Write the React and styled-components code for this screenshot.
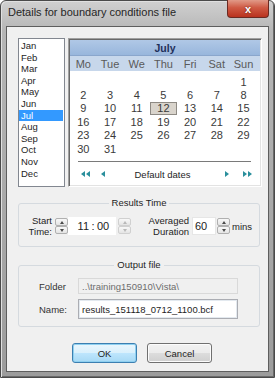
import styled, { createGlobalStyle } from 'styled-components';

const GlobalStyle = createGlobalStyle`
body {
  margin: 0;
  background: #ffffff;
}
* {
  box-sizing: border-box;
}
`

const Frame = styled.div`
width: 275px;
height: 378px;
display: flex;
flex-direction: column;
padding: 0 5px 5px 5px;
border: 1px solid #4a4a4a;
border-radius: 6px 6px 0 0;
background: linear-gradient(#d0d0d0, #b6b6b6 30px, #9c9c9c);
box-shadow: inset 1px 1px 0 #e0e0e0, inset -1px -1px 0 #6a6a6a;
font-family: "Liberation Sans", Arial, sans-serif;
font-size: 9.5px;
color: #1e1e1e;
`

const TitleBar = styled.div`
height: 25px;
display: flex;
align-items: flex-start;
`

const Title = styled.div`
padding: 5px 0 0 2px;
font-size: 11px;
color: #262626;
`

const CloseBtn = styled.div`
margin: -1px 0 0 auto;
width: 42px;
height: 18px;
border: 1px solid #6b2a22;
border-top: none;
border-radius: 0 0 4px 4px;
background: linear-gradient(#e19a88, #cf5a44 45%, #b9321e);
display: flex;
align-items: center;
justify-content: center;
color: #ffffff;
font-size: 11px;
font-weight: bold;
text-shadow: 0 0 2px #5a1a10;
`

const Client = styled.div`
flex: 1;
border: 1px solid #5e5e5e;
background: #f0f0f0;
display: flex;
flex-direction: column;
`

const TopRow = styled.div`
display: flex;
gap: 3px;
margin: 11px 0 0 11px;
height: 149px;
`

const MonthList = styled.div`
width: 47px;
border: 1px solid #828790;
background: #ffffff;
padding: 1px 1px 0 0;
`

const MonthItem = styled.div`
height: 11.6px;
line-height: 11.6px;
padding-left: 2px;
color: ${p => (p.$sel ? '#ffffff' : '#1e1e1e')};
background: ${p => (p.$sel ? '#3399ff' : 'transparent')};
`

const Calendar = styled.div`
width: 194px;
border: 1px solid;
border-color: #a0a0a0 #ffffff #ffffff #a0a0a0;
box-shadow: inset 1px 1px 0 #696969, inset -1px -1px 0 #e3e3e3;
background: #ffffff;
padding: 1px;
display: flex;
flex-direction: column;
font-size: 11px;
`

const MonthHead = styled.div`
height: 16px;
line-height: 16px;
text-align: center;
font-weight: bold;
font-size: 10.5px;
color: #1f2f5a;
background: linear-gradient(#b0c8e6, #98b6dc);
border-bottom: 1px solid #8aa6cc;
`

const DayNames = styled.div`
height: 15px;
display: grid;
grid-template-columns: repeat(7, 26.7px);
align-items: center;
background: #c7d7eb;
color: #5a5a5a;
`

const Cell = styled.div`
text-align: center;
`

const Days = styled.div`
margin-top: 4px;
display: grid;
grid-template-columns: repeat(7, 26.7px);
grid-auto-rows: 13.4px;
color: #3a3a3a;
`

const DayCell = styled.div`
display: flex;
align-items: center;
justify-content: center;
border: 1px solid ${p => (p.$sel ? '#8e8a84' : 'transparent')};
background: ${p => (p.$sel ? '#d9d4cc' : 'transparent')};
`

const Separator = styled.div`
margin: 6px 9px 0 8px;
height: 1px;
background: #7a7a7a;
`

const NavRow = styled.div`
margin-top: 5px;
height: 14px;
display: flex;
align-items: center;
font-size: 9.5px;
color: #1e1e1e;
`

const NavBtn = styled.div`
width: ${p => p.$w}px;
display: flex;
justify-content: center;
`

const NavText = styled.div`
flex: 1;
text-align: center;
`

const Group = styled.fieldset`
margin: ${p => p.$top}px 8px 0 11px;
height: ${p => p.$h}px;
padding: 0;
border: 1px solid #d5dadf;
border-radius: 3px;
min-width: 0;
`

const Legend = styled.legend`
margin: 0 auto;
padding: 0 3px;
line-height: 12px;
color: #1e1e1e;
`

const TimeRow = styled.div`
display: flex;
align-items: center;
margin-top: 7px;
height: 20px;
`

const Label = styled.div`
width: ${p => p.$w}px;
margin-left: ${p => p.$ml || 0}px;
text-align: right;
line-height: 11px;
`

const Spin = styled.div`
width: 13px;
height: 16px;
margin-left: ${p => p.$ml || 0}px;
display: flex;
flex-direction: column;
`

const SpinBtn = styled.div`
flex: 1;
border: 1px solid ${p => (p.$dis ? '#d0d0d0' : '#b0b0b0')};
border-radius: 2px;
background: linear-gradient(#f8f8f8, #e4e4e4);
display: flex;
align-items: center;
justify-content: center;
`

const Tri = styled.span`
width: 0;
height: 0;
border-left: 2.5px solid transparent;
border-right: 2.5px solid transparent;
border-bottom: ${p => (p.$down ? 'none' : `3px solid ${p.$dis ? '#b8b8b8' : '#4a4a4a'}`)};
border-top: ${p => (p.$down ? `3px solid ${p.$dis ? '#b8b8b8' : '#4a4a4a'}` : 'none')};
`

const TimeBox = styled.div`
width: 48px;
height: 18px;
background: #ffffff;
display: flex;
align-items: center;
font-size: 11px;
color: #222;
`

const TimePart = styled.div`
width: ${p => p.$w}px;
text-align: ${p => p.$align};
`

const NumBox = styled.div`
width: 24px;
height: 18px;
margin-left: 3px;
background: #ffffff;
border: 1px solid #e6e6e6;
padding-left: 2px;
display: flex;
align-items: center;
font-size: 11px;
color: #222;
`

const Unit = styled.div`
margin-left: 2px;
font-size: 9.5px;
`

const FileGrid = styled.div`
display: grid;
grid-template-columns: 39px 160px;
grid-template-rows: 16px 20px;
row-gap: 5px;
align-items: center;
margin: 7px 0 0 20px;
`

const FileLabel = styled.div`
color: #333;
`

const Field = styled.div`
height: 100%;
display: flex;
align-items: center;
padding-left: 3px;
border: 1px solid ${p => (p.$dis ? '#d9d9d9' : '#abadb3')};
background: ${p => (p.$dis ? '#f0f0f0' : '#ffffff')};
color: ${p => (p.$dis ? '#6d6d6d' : '#1e1e1e')};
box-shadow: ${p => (p.$dis ? 'none' : 'inset 0 0 0 1px #e3e9ef')};
`

const Buttons = styled.div`
display: flex;
gap: 10px;
margin: 16px 0 0 65px;
`

const Button = styled.div`
width: 65px;
height: 20px;
border-radius: 3px;
border: 1px solid ${p => (p.$def ? '#3c7fb1' : '#707070')};
background: ${p => (p.$def
    ? 'linear-gradient(#eaf6fd, #d9f0fc 50%, #bee6fd 50%, #a7d9f5)'
    : 'linear-gradient(#f2f2f2, #ebebeb 50%, #dddddd 50%, #cfcfcf)')};
box-shadow: inset 0 0 0 1px ${p => (p.$def ? '#8fd0f0' : '#fcfcfc')};
display: flex;
align-items: center;
justify-content: center;
color: #1e1e1e;
`

const months = ['Jan', 'Feb', 'Mar', 'Apr', 'May', 'Jun', 'Jul', 'Aug', 'Sep', 'Oct', 'Nov', 'Dec'];
const dayNames = ['Mo', 'Tue', 'We', 'Thu', 'Fri', 'Sat', 'Sun'];
const days = [null, null, null, null, null, null];
for (let d = 1; d <= 31; d++) days.push(d);

const NavIcon = ({ dir, double }) => (
    <svg width={double ? 9 : 4} height="6" viewBox={double ? '0 0 9 6' : '0 0 4 6'}>
        {dir === 'left' ? (
            double ? (
                <path d="M4 0 L0 3 L4 6 Z M9 0 L5 3 L9 6 Z" fill="#2a8f9c" />
            ) : (
                <path d="M4 0 L0 3 L4 6 Z" fill="#2a8f9c" />
            )
        ) : double ? (
            <path d="M0 0 L4 3 L0 6 Z M5 0 L9 3 L5 6 Z" fill="#2a8f9c" />
        ) : (
            <path d="M0 0 L4 3 L0 6 Z" fill="#2a8f9c" />
        )}
    </svg>
);

const Spinner = ({ ml, dis }) => (
    <Spin $ml={ml}>
        <SpinBtn $dis={dis}><Tri $dis={dis} /></SpinBtn>
        <SpinBtn $dis={dis}><Tri $down $dis={dis} /></SpinBtn>
    </Spin>
);

const App = () => {
    return (
        <>
            <GlobalStyle />
            <Frame>
                <TitleBar>
                    <Title>Details for boundary conditions file</Title>
                    <CloseBtn>x</CloseBtn>
                </TitleBar>
                <Client>
                    <TopRow>
                        <MonthList>
                            {months.map(m => (
                                <MonthItem key={m} $sel={m === 'Jul'}>{m}</MonthItem>
                            ))}
                        </MonthList>
                        <Calendar>
                            <MonthHead>July</MonthHead>
                            <DayNames>
                                {dayNames.map(d => <Cell key={d}>{d}</Cell>)}
                            </DayNames>
                            <Days>
                                {days.map((d, i) => (
                                    <DayCell key={i} $sel={d === 12}>{d}</DayCell>
                                ))}
                            </Days>
                            <Separator />
                            <NavRow>
                                <NavBtn $w={30}><NavIcon dir="left" double /></NavBtn>
                                <NavBtn $w={6}><NavIcon dir="left" /></NavBtn>
                                <NavText>Default dates</NavText>
                                <NavBtn $w={16}><NavIcon dir="right" /></NavBtn>
                                <NavBtn $w={25}><NavIcon dir="right" double /></NavBtn>
                            </NavRow>
                        </Calendar>
                    </TopRow>

                    <Group $top={10} $h={50}>
                        <Legend>Results Time</Legend>
                        <TimeRow>
                            <Label $w={33}>Start<br />Time:</Label>
                            <Spinner ml={3} />
                            <TimeBox>
                                <TimePart $w={21} $align="right">11</TimePart>
                                <TimePart $w={8} $align="center">:</TimePart>
                                <TimePart $w={19} $align="left">00</TimePart>
                            </TimeBox>
                            <Spinner ml={2} dis />
                            <Label $w={58}>Averaged<br />Duration</Label>
                            <NumBox>60</NumBox>
                            <Spinner ml={1} />
                            <Unit>mins</Unit>
                        </TimeRow>
                    </Group>

                    <Group $top={12} $h={68}>
                        <Legend>Output file</Legend>
                        <FileGrid>
                            <FileLabel>Folder</FileLabel>
                            <Field $dis>..\training150910\Vista\</Field>
                            <FileLabel>Name:</FileLabel>
                            <Field>results_151118_0712_1100.bcf</Field>
                        </FileGrid>
                    </Group>

                    <Buttons>
                        <Button $def>OK</Button>
                        <Button>Cancel</Button>
                    </Buttons>
                </Client>
            </Frame>
        </>
    );
};

export default App;
